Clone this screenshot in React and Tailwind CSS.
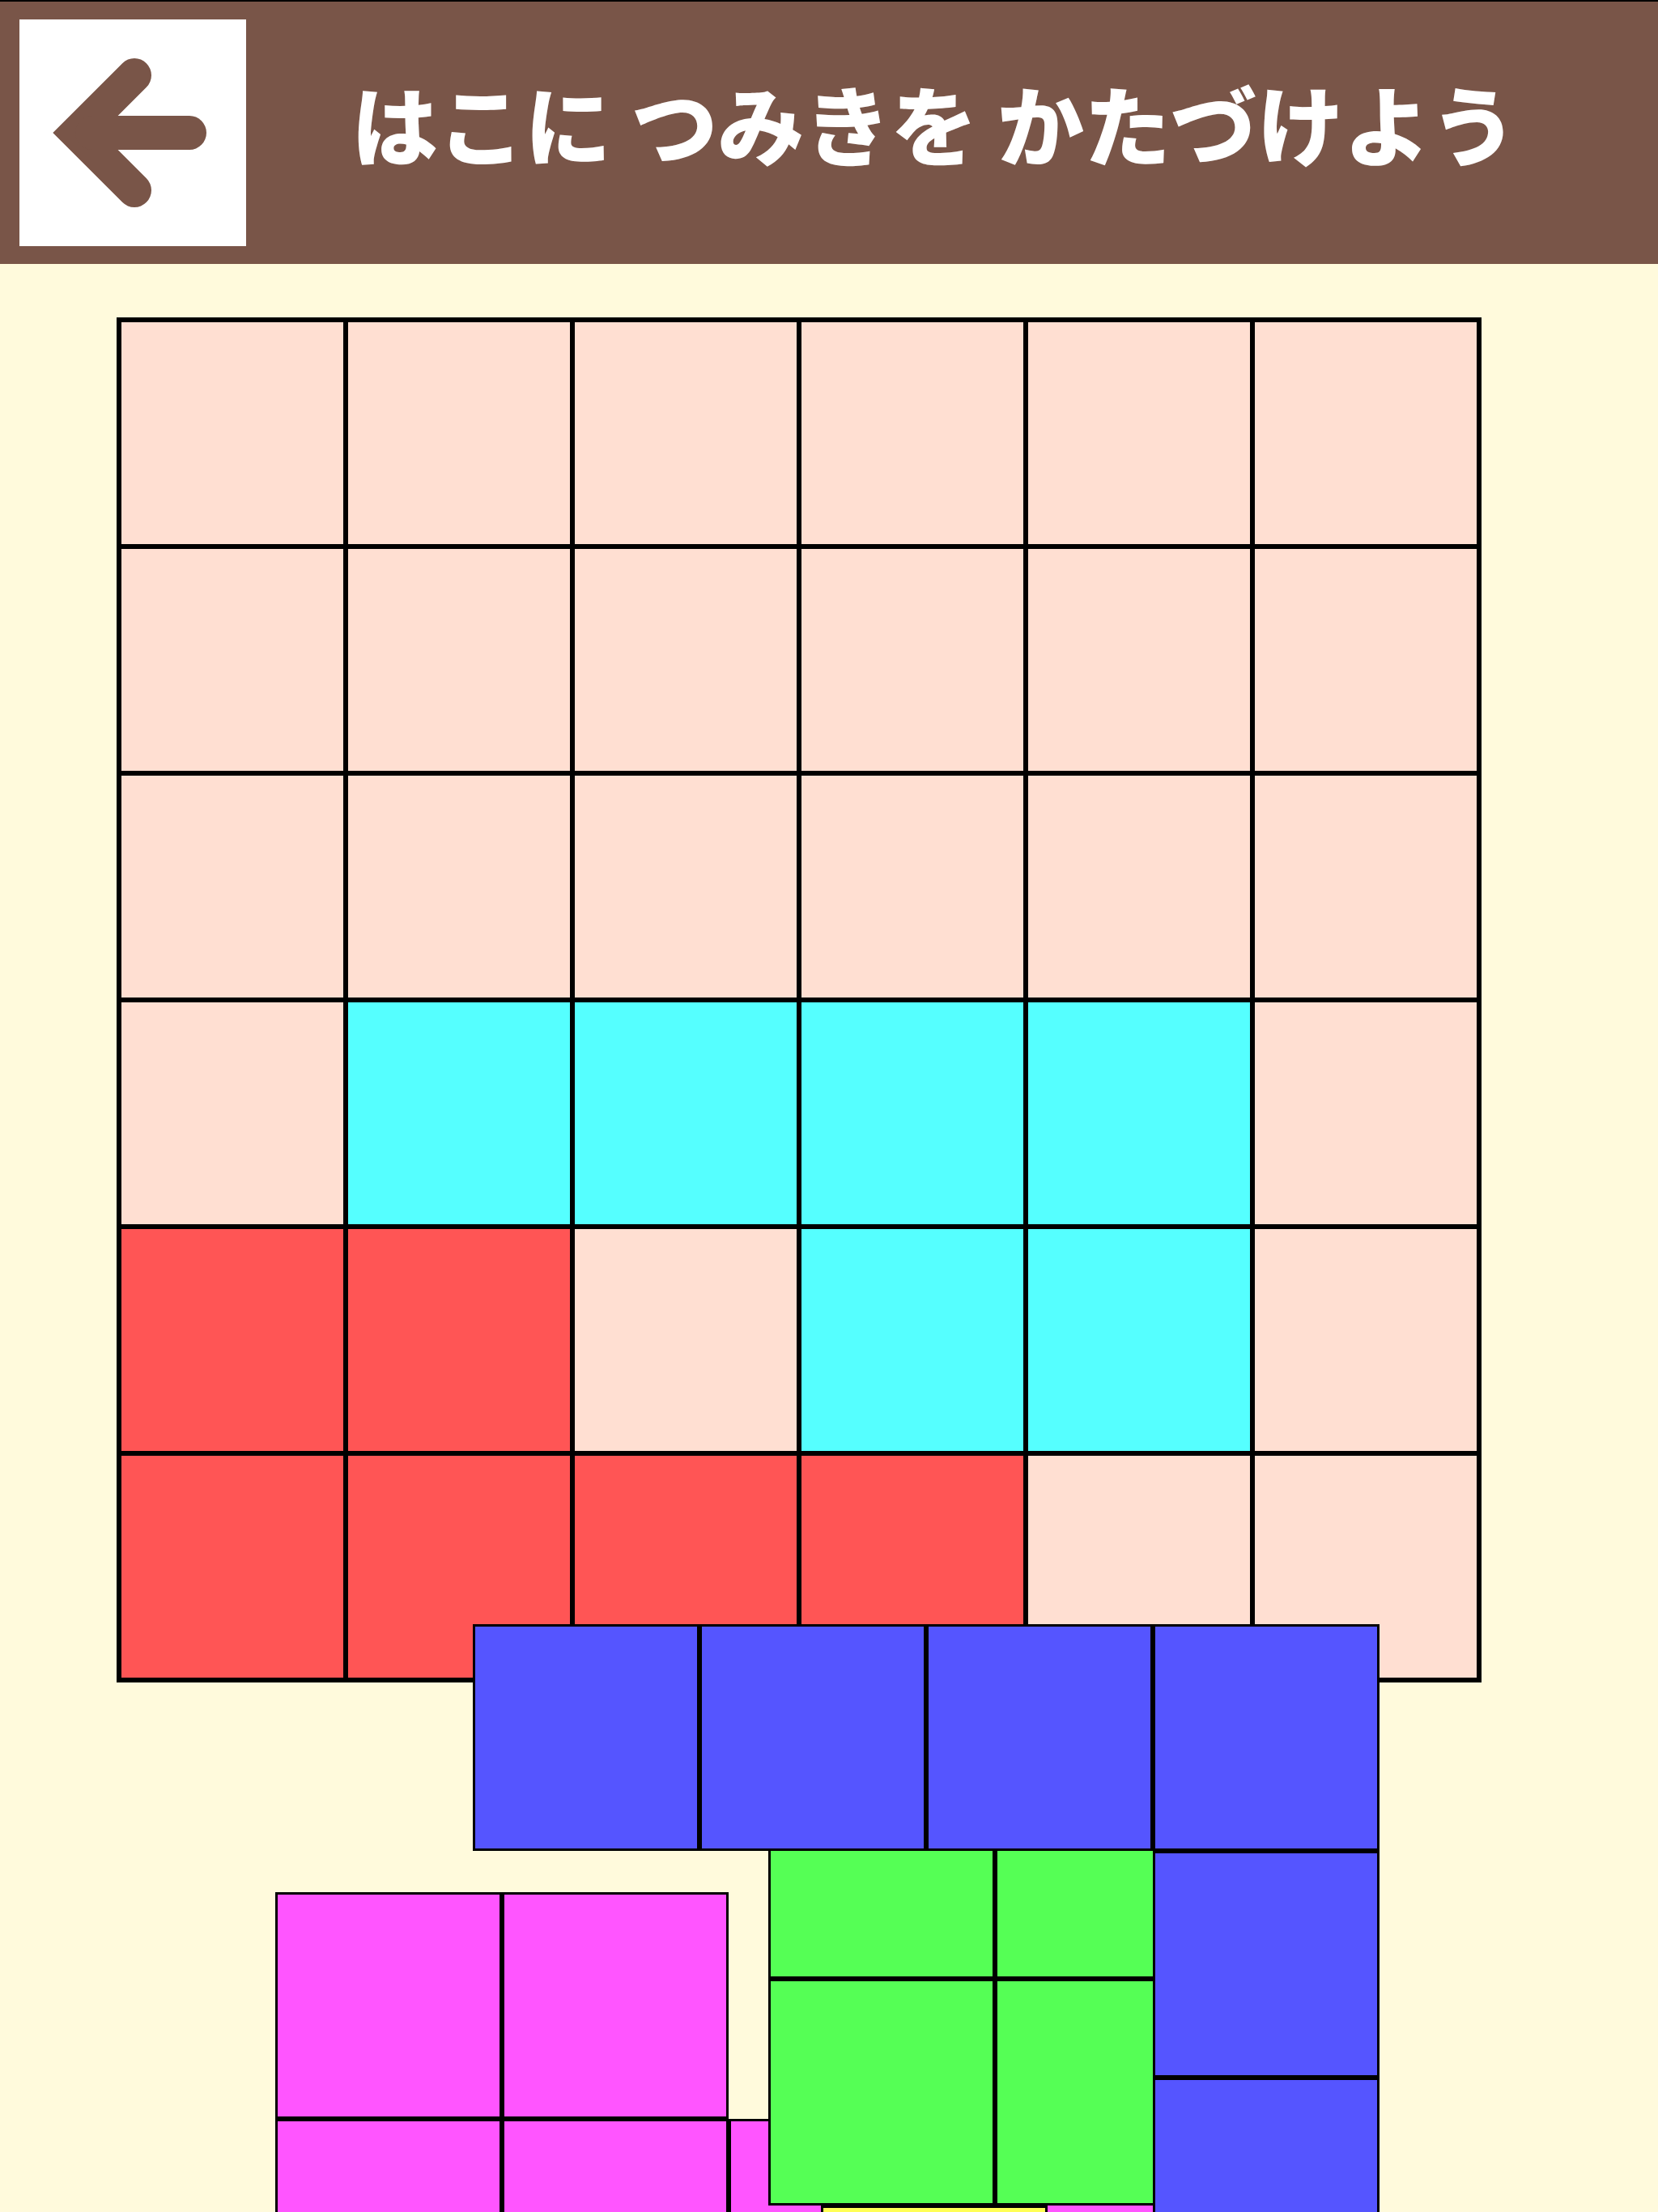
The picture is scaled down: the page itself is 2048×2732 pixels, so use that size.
import React from "react";

const cellBase = "h-[280px] w-[280px] border-[3px] border-black";

const PINK = "bg-[#ffdfd2]";
const CYAN = "bg-[#55ffff]";
const RED = "bg-[#ff5555]";

const board = [
  [PINK, PINK, PINK, PINK, PINK, PINK],
  [PINK, PINK, PINK, PINK, PINK, PINK],
  [PINK, PINK, PINK, PINK, PINK, PINK],
  [PINK, CYAN, CYAN, CYAN, CYAN, PINK],
  [RED, RED, PINK, CYAN, CYAN, PINK],
  [RED, RED, RED, RED, PINK, PINK],
];

function BackArrow() {
  return (
    <svg width="280" height="280" viewBox="0 0 280 280" fill="none">
      <path
        d="M142 69 L71 140 L142 211"
        stroke="#795548"
        strokeWidth="42"
        strokeLinecap="round"
        strokeLinejoin="miter"
        strokeMiterlimit="4"
      />
      <path d="M90 140 H210" stroke="#795548" strokeWidth="42" strokeLinecap="round" />
    </svg>
  );
}

export default function App() {
  return (
    <div className="relative h-[2732px] w-[2048px] overflow-hidden bg-[#fffadc] font-['Noto_Sans_CJK_JP',sans-serif]">
      <header className="flex h-[326px] items-center border-t-2 border-black bg-[#795548] pl-6">
        <button className="flex h-[280px] w-[280px] shrink-0 items-center justify-center bg-white">
          <BackArrow />
        </button>
        <h1 className="mb-[28px] ml-[130px] whitespace-nowrap text-[107px] font-black leading-none text-white">
          はこに つみきを かたづけよう
        </h1>
      </header>

      <main>
        <div className="ml-[144px] mt-[66px] grid w-fit grid-cols-[repeat(6,280px)] border-[3px] border-black">
          {board.flat().map((c, i) => (
            <div key={i} className={`${cellBase} ${c}`} />
          ))}
        </div>
      </main>

      {/* magenta piece */}
      <div className="absolute left-[340px] top-[2337px] grid grid-cols-[repeat(4,280px)] grid-rows-[repeat(2,280px)]">
        <div className={`${cellBase} col-start-1 row-start-1 bg-[#ff55ff]`} />
        <div className={`${cellBase} col-start-2 row-start-1 bg-[#ff55ff]`} />
        <div className={`${cellBase} col-start-1 row-start-2 bg-[#ff55ff]`} />
        <div className={`${cellBase} col-start-2 row-start-2 bg-[#ff55ff]`} />
        <div className={`${cellBase} col-start-3 row-start-2 bg-[#ff55ff]`} />
        <div className={`${cellBase} col-start-4 row-start-2 bg-[#ff55ff]`} />
      </div>

      {/* yellow piece */}
      <div className="absolute left-[1014px] top-[2724px] grid grid-cols-[repeat(1,280px)]">
        <div className={`${cellBase} bg-[#ffff55]`} />
      </div>

      {/* green piece */}
      <div className="absolute left-[949px] top-[2164px] grid grid-cols-[repeat(2,280px)] grid-rows-[repeat(2,280px)]">
        <div className={`${cellBase} bg-[#55ff55]`} />
        <div className={`${cellBase} bg-[#55ff55]`} />
        <div className={`${cellBase} bg-[#55ff55]`} />
        <div className={`${cellBase} bg-[#55ff55]`} />
      </div>

      {/* blue piece */}
      <div className="absolute left-[584px] top-[2006px] grid grid-cols-[repeat(4,280px)] grid-rows-[repeat(3,280px)]">
        <div className={`${cellBase} col-start-1 row-start-1 bg-[#5555ff]`} />
        <div className={`${cellBase} col-start-2 row-start-1 bg-[#5555ff]`} />
        <div className={`${cellBase} col-start-3 row-start-1 bg-[#5555ff]`} />
        <div className={`${cellBase} col-start-4 row-start-1 bg-[#5555ff]`} />
        <div className={`${cellBase} col-start-4 row-start-2 bg-[#5555ff]`} />
        <div className={`${cellBase} col-start-4 row-start-3 bg-[#5555ff]`} />
      </div>
    </div>
  );
}
